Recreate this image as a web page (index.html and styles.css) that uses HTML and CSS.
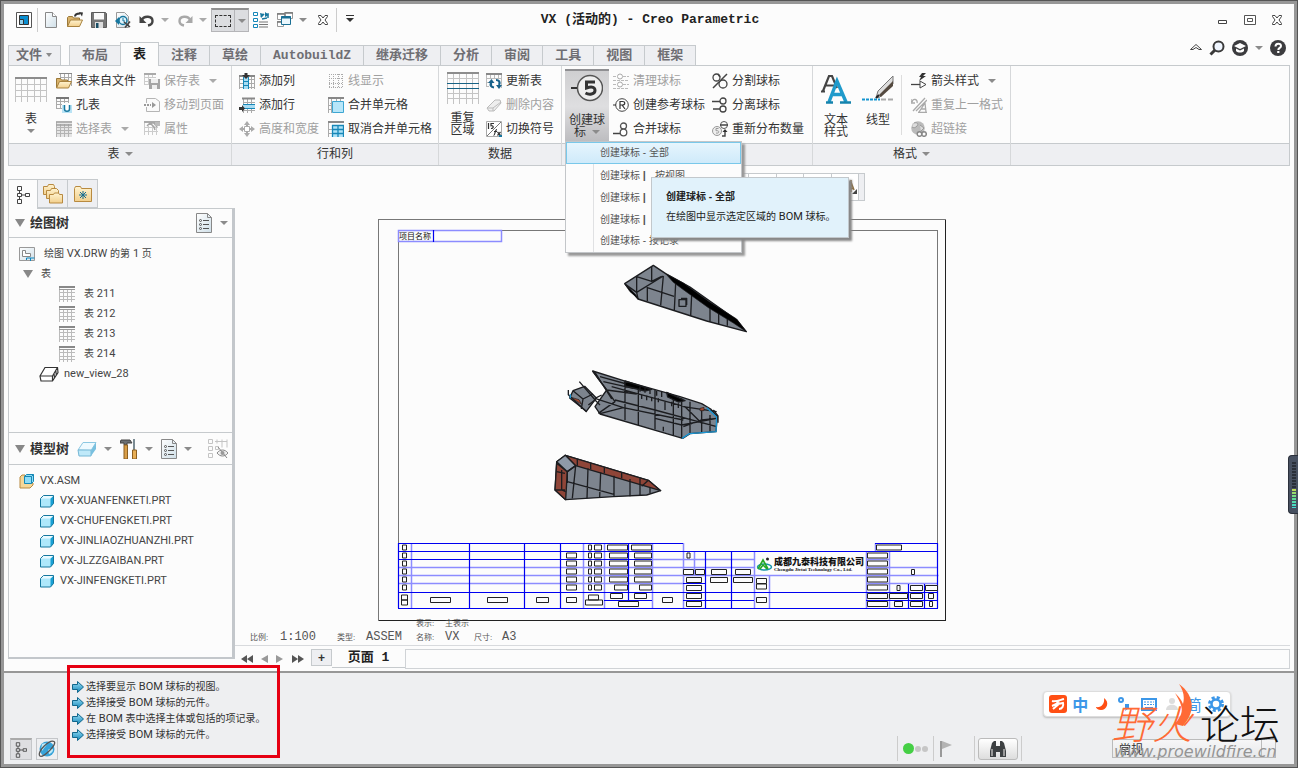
FILE: index.html
```html
<!DOCTYPE html>
<html lang="zh-CN">
<head>
<meta charset="utf-8">
<title>VX (活动的) - Creo Parametric</title>
<link rel="stylesheet" href="styles.css">
</head>
<body>
<svg class="sprite" aria-hidden="true">
  <defs>
    <linearGradient id="gFold" x1="0" y1="0" x2="0" y2="1"><stop offset="0" stop-color="#fff3d0"/><stop offset="1" stop-color="#f2cf8c"/></linearGradient>
    <linearGradient id="gPage" x1="0" y1="0" x2="1" y2="1"><stop offset="0" stop-color="#fff"/><stop offset="1" stop-color="#cfdfe8"/></linearGradient>
    <linearGradient id="gBlue" x1="0" y1="0" x2="1" y2="1"><stop offset="0" stop-color="#e6f8ff"/><stop offset="1" stop-color="#7dcbee"/></linearGradient>
    <linearGradient id="gArrow" x1="0" y1="0" x2="0" y2="1"><stop offset="0" stop-color="#9be0f8"/><stop offset="1" stop-color="#1186b8"/></linearGradient>
  </defs>
  <symbol id="app" viewBox="0 0 16 16"><path d="M.5.5h15v15H.5z" fill="#fff" stroke="#555"/><path d="M3.500 3.500h9v9h-9z" fill="#0a8ed0" stroke="#333"/><path d="M3.500 7.500h4v5h-4z" fill="#8fd0ee" stroke="#333"/></symbol>
  <symbol id="page" viewBox="0 0 16 16"><path d="M2.500.5h7l4 4v11h-11z" fill="url(#gPage)" stroke="#888"/><path d="M9.500.5v4h4" fill="#fff" stroke="#888"/></symbol>
  <symbol id="open" viewBox="0 0 16 16"><path d="M.5 14.500v-9l1-1h4l1 1.500h6v3" fill="#d9b36c" stroke="#9b7838"/><path d="M.5 14.500l3-6.500h12l-3 6.500z" fill="url(#gFold)" stroke="#a8823f"/><path d="M8 4.500c0-2 2-3 5-3" fill="none" stroke="#333" stroke-width="2"/><path d="M12 0l4 .5-1 4z" fill="#333"/></symbol>
  <symbol id="save" viewBox="0 0 16 16"><path d="M.5.5h14l1 1v14H.5z" fill="#777" stroke="#5c5c5c"/><path d="M3 1h10v6.500H3z" fill="#fafafa"/><path d="M4 10h8v6H4z" fill="#ddd"/><path d="M5 11h2.500v5H5z" fill="#1a4f66"/></symbol>
  <symbol id="pageback" viewBox="0 0 16 16"><path d="M1.500.5h8l4 4v11h-12z" fill="url(#gPage)" stroke="#999"/><path d="M0 9l4-4v8z" fill="#17779f"/><circle cx="8" cy="8.500" r="4" fill="#dff3fb" stroke="#17779f" stroke-width="1.500"/><path d="M8 6v3h2" fill="none" stroke="#17779f"/><path d="M9 10l6 5M15 9.500l-5 6" stroke="#444" stroke-width="1.600"/></symbol>
  <symbol id="undo" viewBox="0 0 16 16"><path d="M2.500 8.500C5 3 13.500 4 13.500 9c0 2.500-2 4-4.500 4.500" fill="none" stroke="#444" stroke-width="2.400"/><path d="M.500 4v7h7z" fill="#444"/></symbol>
  <symbol id="quick" viewBox="0 0 16 16"><g fill="#fff" stroke="#1586b8"><path d="M.5.5h4v3h-4zM.5 6.500h4v3h-4zM.5 12.500h4v3h-4z"/></g><path d="M6 10h9M6 12.500h9M6 15h9" stroke="#777"/><path d="M8 5l3-3M9 7l5-1M15 6V2l-3 1" fill="none" stroke="#17779f" stroke-width="1.500"/><path d="M7 1l4 1-3 4zM12 0l4 3-4 2z" fill="#17779f"/></symbol>
  <symbol id="wins" viewBox="0 0 16 16"><path d="M.5 1.500h8v6h-8zM7.500.5h8v6h-8zM.5 9.500h6v5h-6z" fill="#fff" stroke="#999"/><path d="M0 2h8M8 1h8M0 10h6" stroke="#777" stroke-width="1.500"/><path d="M4.500 4.500h9v8h-9z" fill="#eaf7fd" stroke="#1a6f94"/><path d="M4 5.500h10" stroke="#1a6f94" stroke-width="2"/></symbol>
  <symbol id="xx" viewBox="0 0 12 12"><path d="M1.500 1.500h2.500l2 2.500 2-2.500h2.500v1L8 6l2.500 3.500v1H8L6 8l-2 2.500H1.500v-1L4 6 1.500 2.500z" fill="#fff" stroke="#444"/></symbol>
  <symbol id="minw" viewBox="0 0 12 12"><path d="M1.500 6.500h8v3h-8z" fill="#fff" stroke="#444"/></symbol>
  <symbol id="maxw" viewBox="0 0 12 12"><path d="M.5 1.500h11v9H.5zM3.500 4.500h5v3h-5z" fill="#fff" stroke="#555"/></symbol>
  <symbol id="up" viewBox="0 0 12 12"><path d="M.5 7.500L6 2.500l5.500 5H9L6 5.500 3 7.500z" fill="#fff" stroke="#444"/></symbol>
  <symbol id="find" viewBox="0 0 16 16"><circle cx="9.500" cy="6.500" r="5" fill="#f0f6ff" stroke="#3a3a3a" stroke-width="2"/><path d="M6 10l-4.500 4.500" stroke="#3a3a3a" stroke-width="3"/></symbol>
  <symbol id="learn" viewBox="0 0 16 16"><circle cx="8" cy="8" r="8" fill="#3c3c3f"/><path d="M8 3l6 3-6 3-6-3zM4 8.500v2.500c2 2 6 2 8 0V8.500L8 10.500z" fill="#fff"/></symbol>
  <symbol id="help" viewBox="0 0 16 16"><circle cx="8" cy="8" r="8" fill="#3c3c3f"/><path d="M5.500 6.500c0-4 5.500-3.500 5.500-.5 0 2-2.700 1.800-2.700 4" fill="none" stroke="#fff" stroke-width="2"/><path d="M7.200 11h2.200v2H7.200z" fill="#fff"/></symbol>
  <symbol id="grid" viewBox="0 0 16 16"><path d="M.5 1v15M4.500 3v13M8.500 3v13M12.500 3v13M0 6.500h16M0 10.500h16M0 13.500h16" stroke="#bbb"/><path d="M0 1h16" stroke="#888" stroke-width="2"/><path d="M0 3.500h16" stroke="#999"/></symbol>
  <symbol id="big" viewBox="0 0 32 26"><path d="M.5 2v23M6.500 2v23M12.500 2v23M19.500 2v23M25.500 2v23M31.500 2v23M0 7.500h32M0 13.500h32M0 19.500h32" stroke="#c4c4c4"/><path d="M0 1h32" stroke="#8d8d8d" stroke-width="2"/></symbol>
  <symbol id="repeat" viewBox="0 0 32 32"><path d="M.5 2v30M6.500 2v30M12.500 2v30M19.500 2v30M25.500 2v30M31.500 2v30M0 6.500h32M0 21.500h32M0 26.500h32" stroke="#c4c4c4"/><path d="M0 1h32" stroke="#8d8d8d" stroke-width="2"/><path d="M0 11.500h32M0 16.500h32" stroke="#176284"/></symbol>
  <symbol id="tfile" viewBox="0 0 16 16"><path d="M4.500 1v6M8.500 1v6M12.500 1v12M4 4.500h12M15.500 1v12" stroke="#aaa"/><path d="M3 .5h13" stroke="#888"/><path d="M.5 14.500v-9h4l1 1.500h6v3" fill="#d9b36c" stroke="#9b7838"/><path d="M.5 15l3-6.500h12l-3 6.500z" fill="url(#gFold)" stroke="#a8823f"/></symbol>
  <symbol id="hole" viewBox="0 0 16 16"><path d="M.5 1v11M4.500 1v11M8.500 1v5M12.500 1v5M0 4.500h13M0 7.500h6M0 11.500h6" stroke="#aaa"/><path d="M0 1h13" stroke="#777" stroke-width="2"/><path d="M6 8h10v8H6z" fill="#b9e3f5"/><path d="M8.500 8v4c0 3 5 3 5 0V8" fill="#fff" stroke="#17779f" stroke-width="1.500"/></symbol>
  <symbol id="selt" viewBox="0 0 16 16"><path d="M0 0h16v16H0z" fill="#e6e6e6"/><path d="M.5 1v15M4.500 3v13M8.500 3v13M12.500 3v13M0 6.500h16M0 9.500h16M0 12.500h16" stroke="#b4b4b4"/><path d="M0 1h16M0 4h16" stroke="#a0a0a0" stroke-width="1.500"/></symbol>
  <symbol id="savet" viewBox="0 0 16 16"><path d="M.5 0v12M4.500 0v12M8.500 0v5M0 4.500h12M0 8.500h5M0 11.500h5" stroke="#ccc"/><path d="M0 1h12" stroke="#aaa" stroke-width="2"/><path d="M5 6h11v10H5z" fill="#a4a4a4"/><path d="M7 6h7v4H7zM8 12h5v4H8z" fill="#eee"/></symbol>
  <symbol id="move" viewBox="0 0 16 16"><path d="M2.500 6V1.500h9l4 3v10h-13V10" fill="#fafafa" stroke="#b5b5b5"/><path d="M0 8h7" stroke="#999" stroke-width="2" stroke-dasharray="2 1"/><path d="M8 5l4 3-4 3z" fill="#999"/></symbol>
  <symbol id="prop" viewBox="0 0 16 16"><path d="M.5 1v13M4.500 5v9M8.500 5v9M12.500 7v7M0 6.500h14M0 10.500h14" stroke="#ccc"/><path d="M0 1h16" stroke="#aaa" stroke-width="2"/><path d="M3 5l3-3 4 4 1 3M6 2h4l3 4" fill="none" stroke="#a5a5a5" stroke-width="1.500"/><path d="M11 1h5v4h-5z" fill="#bbb"/></symbol>
  <symbol id="addcol" viewBox="0 0 16 16"><path d="M.5 3v13M12.500 3v13M15.500 3v13M0 6.500h16M0 10.500h16M0 14.500h16" stroke="#aaa"/><path d="M0 3h16" stroke="#888" stroke-width="2"/><path d="M4 4h6v12H4z" fill="#a9dcf2"/><path d="M4.500 4v12M9.500 4v12M4 8.500h6M4 12.500h6" stroke="#1787b8"/><path d="M7 6L3 2h2.500V0h3v2H11z" fill="#333"/></symbol>
  <symbol id="addrow" viewBox="0 0 16 16"><path d="M4.500 1v15M8.500 1v15M12.500 1v15M4 5.500h12M4 13.500h12" stroke="#aaa"/><path d="M3 1.500h13" stroke="#888" stroke-width="2"/><path d="M4 7.500h12v4H4z" fill="#a9dcf2"/><path d="M4 7.500h12M4 11.500h12" stroke="#1787b8"/><path d="M6 11.500l-3-3.500v2H0v3h3v2z" fill="#333"/></symbol>
  <symbol id="hw" viewBox="0 0 16 16"><path d="M8 0l3 4H5zM8 16l3-4H5zM0 8l4-3v6zM16 8l-4-3v6z" fill="#aaa"/><path d="M5.500 5.500h5v5h-5z" fill="#fff" stroke="#aaa"/><path d="M8 4v2M8 10v2M4 8h2M10 8h2" stroke="#aaa" stroke-width="2"/></symbol>
  <symbol id="ldisp" viewBox="0 0 16 16"><path d="M1.500 1v14M5.500 1v14M10.500 1v14M14.500 1v14M1 1.500h14M1 5.500h14M1 10.500h14M1 14.500h14" stroke="#aaa" stroke-dasharray="1 1"/></symbol>
  <symbol id="merge" viewBox="0 0 16 16"><path d="M.5 1v15M2 6.500h14M0 8.500h4M0 12.500h4M3.500 1v15M8.500 1v4M12.500 1v4" stroke="#aaa"/><path d="M0 1h16" stroke="#888" stroke-width="2"/><path d="M4.500 4.500h11v11h-11z" fill="#b7e6f9" stroke="#3da6d2"/></symbol>
  <symbol id="unmerge" viewBox="0 0 16 16"><path d="M.5 1v15M0 8.500h4M0 12.500h4" stroke="#aaa"/><path d="M0 1h16" stroke="#888" stroke-width="2"/><path d="M4 4h12v12H4z" fill="#aee2f7"/><path d="M4.500 4v12M10 4v12M15.500 4v12M4 4.500h12M4 8.500h12M4 12.500h12" stroke="#1787b8" stroke-width="1.300"/></symbol>
  <symbol id="refresh" viewBox="0 0 16 16"><path d="M.5 1v12M4.500 1v4M8.500 1v4M12.500 1v4M15.500 1v14M0 5.500h16M0 9.500h3M0 13.500h3" stroke="#bbb"/><path d="M0 1h16" stroke="#888" stroke-width="2"/><path d="M5 12.500V9M8 14.500c-3-.5-4-2-3-5M10 7c3 0 4.500 2 3 5" fill="none" stroke="#17618a" stroke-width="2.200"/><path d="M2 10l3.500-4L8.500 10zM10 12h6l-3 4z" fill="#17618a"/></symbol>
  <symbol id="erase" viewBox="0 0 16 16"><path d="M1 11l8-8h5l1 3-7 8H3z" fill="#eee" stroke="#bbb"/><path d="M1 11h6l8-6M7 11v3" fill="none" stroke="#bbb"/></symbol>
  <symbol id="symb" viewBox="0 0 16 16"><path d="M.5.5h15v15H.5z" fill="#fff" stroke="#aaa"/><path d="M15 1L1 15" stroke="#777"/><path d="M2.500 2v6M8 2.500H5v2.200c3-.5 3 3 0 2.800M7.500 14.500c2 0 1-6 3.500-6M8 10.500h3M11.500 11l3 3.500M14.500 11l-3 3.500" fill="none" stroke="#333" stroke-width="1.200"/><path d="M13 14h3v2h-3z" fill="#17779f"/></symbol>
  <symbol id="balloon" viewBox="0 0 32 28"><circle cx="19" cy="14" r="12.500" fill="#eee" stroke="#555" stroke-width="1.500"/><path d="M0 14h6" stroke="#333" stroke-width="2"/><path d="M24 8h-8.500v6c6-2 8.500-.5 8.500 2.500 0 4-6 4.500-9.500 2.500" fill="none" stroke="#333" stroke-width="3"/></symbol>
  <symbol id="clean" viewBox="0 0 16 16"><path d="M0 3.500h4M10 3.500h6M0 7.500h16M0 11.500h4M10 11.500h6M0 15.500h16" stroke="#bbb" stroke-dasharray="3 1"/><circle cx="7" cy="3.500" r="2.500" fill="#fff" stroke="#aaa"/><circle cx="7" cy="11.500" r="2.500" fill="#fff" stroke="#aaa"/></symbol>
  <symbol id="refb" viewBox="0 0 16 16"><circle cx="9" cy="8" r="6.300" fill="#fff" stroke="#444"/><path d="M0 8h3M7 12V4.500h2.500c3 0 3 3.500 0 3.500H7M9 8l3 4" fill="none" stroke="#333" stroke-width="1.200"/></symbol>
  <symbol id="mergeb" viewBox="0 0 16 16"><path d="M0 12.500h8" stroke="#444" stroke-width="1.500"/><circle cx="10.500" cy="5" r="3" fill="#fff" stroke="#555" stroke-width="1.300"/><circle cx="10.500" cy="11.500" r="3.300" fill="#fff" stroke="#555" stroke-width="1.300"/></symbol>
  <symbol id="splitb" viewBox="0 0 16 16"><circle cx="4.500" cy="4.500" r="3.500" fill="none" stroke="#444" stroke-width="1.300"/><circle cx="11" cy="11" r="4" fill="none" stroke="#444" stroke-width="1.300"/><path d="M15 1L1 15M6 1l2 3" stroke="#444" stroke-width="1.500"/></symbol>
  <symbol id="detach" viewBox="0 0 16 16"><path d="M0 4.500h8M1 12h7" stroke="#444" stroke-width="1.300"/><circle cx="11" cy="4" r="3" fill="#fff" stroke="#444" stroke-width="1.300"/><circle cx="11" cy="12" r="3" fill="#fff" stroke="#444" stroke-width="1.300"/></symbol>
  <symbol id="redist" viewBox="0 0 16 16"><circle cx="5" cy="10" r="4.500" fill="#eee" stroke="#999"/><path d="M6.500 7.500H4v2.200c4-.6 3.500 3.300 0 2.300" fill="none" stroke="#999"/><circle cx="12" cy="4" r="3.500" fill="#fff" stroke="#555"/><path d="M8 4h8M10 15h3V9" fill="none" stroke="#444" stroke-width="1.400"/><path d="M10.500 11L13 8l2.500 3z" fill="#333"/></symbol>
  <symbol id="aa" viewBox="0 0 30 30"><path d="M2 17L8 2h3l5 12M4 11.500h9M0 17.500h4" fill="none" stroke="#444" stroke-width="2.200"/><path d="M8 28l8-21 9 21M12 20.500h10" fill="none" stroke="#1f9acb" stroke-width="3.400"/><path d="M5 28.500h7M19 28.500h11" stroke="#1583ad" stroke-width="2.500"/></symbol>
  <symbol id="pen" viewBox="0 0 32 28"><path d="M14 23l2-7L31 1v8L18 22z" fill="#ddd" stroke="#777"/><path d="M17 20L31 6v5L19 22z" fill="#554a40"/><path d="M14 23l3-3" stroke="#222" stroke-width="2"/><path d="M0 24.500h18" stroke="#1695d0" stroke-width="2" stroke-dasharray="3 1"/><path d="M19 24.500h13" stroke="#aaa" stroke-width="2" stroke-dasharray="5 2"/></symbol>
  <symbol id="arrowst" viewBox="0 0 16 16"><path d="M0 11.500h11" stroke="#444" stroke-width="1.300"/><path d="M9 8l6 3.500-6 3.500z" fill="#fff" stroke="#444"/><path d="M11 0h4l-3 3h3L8 8l2-4H8z" fill="#333"/></symbol>
  <symbol id="repfmt" viewBox="0 0 16 16"><path d="M1 5c1-4 6-3 5 1M0 2v4h4M2 14L14 1M5 14L16 3M8 15l6-9 1 9M10 12h5M7 15.500h9" fill="none" stroke="#aaa" stroke-width="1.300"/></symbol>
  <symbol id="link" viewBox="0 0 16 16"><circle cx="7" cy="7" r="6.800" fill="#bbb"/><path d="M3 2c3-1 5 1 3 3S3 7 1 6M9 4l4 3-3 3" fill="#ddd" stroke="#999"/><circle cx="8.500" cy="13" r="2.300" fill="#fff" stroke="#888" stroke-width="1.500"/><circle cx="13" cy="13" r="2.300" fill="none" stroke="#888" stroke-width="1.500"/></symbol>
  <symbol id="tree" viewBox="0 0 14 20"><path d="M1.500 1.500h4v4h-4zM1.500 8.500h4v3h-4zM1.500 14.500h4v4h-4zM9.500 8.500h4v3h-4zM3.500 5.500v3M3.500 11.500v3M5.500 10h4" fill="none" stroke="#444"/></symbol>
  <symbol id="folders" viewBox="0 0 20 20"><g fill="url(#gFold)" stroke="#b88a40"><path d="M.5 2.500h4l1-2h5l1 2v8H.5z"/><path d="M3.500 6.500h4l1-2h5l2 2v8h-12z"/><path d="M6.500 10.500h4l1-1.500h4l1 1.500h3v8.500h-13z"/></g></symbol>
  <symbol id="favs" viewBox="0 0 18 18"><path d="M.5 3.500l1-2h5l1 2h10v13H.5z" fill="url(#gFold)" stroke="#b88a40"/><path d="M9 6v8M5 10h8M6 7l6 6M12 7l-6 6" stroke="#176d91"/></symbol>
  <symbol id="list" viewBox="0 0 16 20"><path d="M.5.5h11l4 4v15H.5z" fill="url(#gPage)" stroke="#888"/><path d="M11.500.5v4h4" fill="none" stroke="#888"/><circle cx="4.500" cy="7.500" r="1" fill="none" stroke="#555"/><circle cx="4.500" cy="11.500" r="1" fill="none" stroke="#555"/><circle cx="4.500" cy="15.500" r="1" fill="none" stroke="#555"/><path d="M7 7.500h6M7 11.500h6M7 15.500h6" stroke="#555"/></symbol>
  <symbol id="drw" viewBox="0 0 16 14"><path d="M.5.5h15v13H.5z" fill="url(#gPage)" stroke="#999"/><path d="M3.500 3.500h3v3h5v3h-8z" fill="#fff" stroke="#888"/><path d="M7.500 13v-2h8M11.500 11v3" fill="none" stroke="#0d85bd"/></symbol>
  <symbol id="view" viewBox="0 0 20 16"><path d="M1 10L6 1.500h12.500l.5 5-5.500 8.500H2zM1 10h12.500L18.500 1.500M13.500 10v5M15 7.500l.5 4.500M16.800 4.500l.5 4.500" fill="#fff" stroke="#333" stroke-width="1.200"/></symbol>
  <symbol id="layer" viewBox="0 0 20 16"><path d="M1 9L6 1.500h13l-5 8z" fill="#eefaff" stroke="#8cc8e2"/><path d="M1 9l1 6h12v-6z" fill="#bfe9f9" stroke="#75b7d5"/><path d="M14 9.500v5.500l5-7V1.500z" fill="#79c0df"/></symbol>
  <symbol id="tools" viewBox="0 0 18 20"><path d="M1 1h9l2 3H7v2H4V4H0z" fill="#6b6f73" stroke="#444"/><path d="M4 6h3.500v14H4z" fill="#d99e48" stroke="#8c5f20"/><path d="M14 0v11" stroke="#7b8b93" stroke-width="2"/><path d="M12.500 11h4v9h-4z" fill="#e8ae55" stroke="#8c5f20"/></symbol>
  <symbol id="hidet" viewBox="0 0 20 20"><path d="M.5.5h4v4h-4zM.5 7.500h4v4h-4zM.5 14.500h4v4h-4zM7.500 7.500h3v3h-3zM9 .5v4M14 .5v8M19 .5v8M7 2.500h12" fill="none" stroke="#c4c4c4"/><path d="M9 14c3-4 8-4 11 0-3 4-8 4-11 0zM10 8l9 11" fill="#eee" stroke="#888"/><circle cx="14.500" cy="14" r="2" fill="#999"/></symbol>
  <symbol id="asm" viewBox="0 0 16 16"><path d="M1 4l2-2h3v8h8v2l-3 3H1z" fill="#f6d798" stroke="#b88a40"/><path d="M5.500 3.500l2-2h7v7l-2 2h-7z" fill="#8fdcf6" stroke="#1688b5"/><path d="M12.500 3.500v7M5.500 3.500h7l2-2" fill="none" stroke="#1688b5"/></symbol>
  <symbol id="prt" viewBox="0 0 14 14"><path d="M.5 4.500l3-3h10v8l-3 3.500H.5z" fill="#aee8fb"/><path d="M10.500 4.500v8.500l3-3.500v-8z" fill="#18a0d4"/><path d="M.5 4.500l3-3h10l-3 3z" fill="#e9faff"/><path d="M.5 4.500l3-3h10v8l-3 3.500H.5z" fill="none" stroke="#16789f"/></symbol>
  <symbol id="msg" viewBox="0 0 12 12"><path d="M.5 3.500h5v-3l6 5.500-6 5.500v-3h-5z" fill="url(#gArrow)" stroke="#11678c"/></symbol>
  <symbol id="globe" viewBox="0 0 18 18"><circle cx="9" cy="9" r="7.500" fill="#38a4da"/><path d="M4 4c4-2 6 0 3 3s-1 4-4 3zM10 10c3-2 5-2 5 0s-3 4-4 4z" fill="#bde9f8"/><path d="M2 16C-2 12 12-1 16 1.500 20 4 5 18 2 16z" fill="none" stroke="#555" stroke-width="1.300"/></symbol>
  <symbol id="flag" viewBox="0 0 12 16"><path d="M1 0v16" stroke="#999" stroke-width="2"/><path d="M2 0l10 4-10 4z" fill="#b3b3b3"/></symbol>
  <symbol id="binoc" viewBox="0 0 18 16"><path d="M3 2l2-2h2v5h4V0h2l2 2 2 8v6h-6v-5H7v5H1v-6z" fill="#3d4042"/><path d="M3 8v7M15 8v7" stroke="#999" stroke-width="2"/></symbol>
</svg>

<div class="window">
  <header class="titlebar">
    <div class="quick">
      <button class="qb" aria-label="Creo"><svg><use href="#app"/></svg></button>
      <i class="sep"></i>
      <button class="qb" aria-label="新建"><svg><use href="#page"/></svg></button>
      <button class="qb" aria-label="打开"><svg><use href="#open"/></svg></button>
      <button class="qb" aria-label="保存"><svg><use href="#save"/></svg></button>
      <button class="qb" aria-label="返回"><svg><use href="#pageback"/></svg></button>
      <button class="qb" aria-label="撤消"><svg><use href="#undo"/></svg></button>
      <button class="qa" aria-label="撤消列表"><i class="caret light"></i></button>
      <button class="qb" aria-label="重做"><svg class="flip"><use href="#undo"/></svg></button>
      <button class="qa" aria-label="重做列表"><i class="caret light"></i></button>
      <div class="split">
        <button class="marq" aria-label="选择"><i></i></button>
        <button class="marqa" aria-label="选择列表"><i class="caret"></i></button>
      </div>
      <button class="qb" aria-label="重新生成"><svg><use href="#quick"/></svg></button>
      <button class="qb" aria-label="窗口"><svg><use href="#wins"/></svg></button>
      <button class="qa" aria-label="窗口列表"><i class="caret"></i></button>
      <button class="qb" aria-label="关闭"><svg class="s12"><use href="#xx"/></svg></button>
      <i class="sep"></i>
      <button class="qb" aria-label="自定义"><i class="caret custom"></i></button>
    </div>
    <h1>VX (活动的) - Creo Parametric</h1>
    <div class="winctl">
      <button aria-label="最小化"><svg class="s12"><use href="#minw"/></svg></button>
      <button aria-label="最大化"><svg class="s12"><use href="#maxw"/></svg></button>
      <button aria-label="关闭窗口"><svg class="s12"><use href="#xx"/></svg></button>
    </div>
  </header>

  <nav class="tabs">
    <button class="tab file">文件<i class="caret"></i></button>
    <button class="tab">布局</button><button class="tab active">表</button><button class="tab">注释</button><button class="tab">草绘</button><button class="tab">AutobuildZ</button><button class="tab">继承迁移</button><button class="tab">分析</button><button class="tab">审阅</button><button class="tab">工具</button><button class="tab">视图</button><button class="tab last">框架</button>
    <div class="helpers">
      <button aria-label="最小化功能区"><svg class="s12"><use href="#up"/></svg></button>
      <button aria-label="搜索"><svg><use href="#find"/></svg></button>
      <button aria-label="学习"><svg><use href="#learn"/></svg></button>
      <i class="caret"></i>
      <button aria-label="帮助"><svg><use href="#help"/></svg></button>
    </div>
  </nav>

  <section class="ribbon">
    <div class="group g1">
      <div class="gbody">
        <button class="bigbtn"><svg class="i26"><use href="#big"/></svg><span>表</span><i class="caret"></i></button>
        <div class="col">
          <button class="cmd"><svg><use href="#tfile"/></svg>表来自文件</button>
          <button class="cmd"><svg><use href="#hole"/></svg>孔表</button>
          <button class="cmd off"><svg><use href="#selt"/></svg>选择表<i class="caret light"></i></button>
        </div>
        <div class="col">
          <button class="cmd off"><svg><use href="#savet"/></svg>保存表<i class="caret light"></i></button>
          <button class="cmd off"><svg><use href="#move"/></svg>移动到页面</button>
          <button class="cmd off"><svg><use href="#prop"/></svg>属性</button>
        </div>
      </div>
      <div class="gname">表<i class="caret"></i></div>
    </div>
    <div class="group g2">
      <div class="gbody">
        <div class="col">
          <button class="cmd"><svg><use href="#addcol"/></svg>添加列</button>
          <button class="cmd"><svg><use href="#addrow"/></svg>添加行</button>
          <button class="cmd off"><svg><use href="#hw"/></svg>高度和宽度</button>
        </div>
        <div class="col">
          <button class="cmd off"><svg><use href="#ldisp"/></svg>线显示</button>
          <button class="cmd"><svg><use href="#merge"/></svg>合并单元格</button>
          <button class="cmd"><svg><use href="#unmerge"/></svg>取消合并单元格</button>
        </div>
      </div>
      <div class="gname">行和列</div>
    </div>
    <div class="group g3">
      <div class="gbody">
        <button class="bigbtn"><svg class="i32"><use href="#repeat"/></svg><span>重复<br>区域</span></button>
        <div class="col">
          <button class="cmd"><svg><use href="#refresh"/></svg>更新表</button>
          <button class="cmd off"><svg><use href="#erase"/></svg>删除内容</button>
          <button class="cmd"><svg><use href="#symb"/></svg>切换符号</button>
        </div>
      </div>
      <div class="gname">数据</div>
    </div>
    <div class="group g4">
      <div class="gbody">
        <button class="bigbtn pressed" aria-expanded="true"><svg class="i32"><use href="#balloon"/></svg><span>创建球<br>标<i class="caret"></i></span></button>
        <div class="col">
          <button class="cmd off"><svg><use href="#clean"/></svg>清理球标</button>
          <button class="cmd"><svg><use href="#refb"/></svg>创建参考球标</button>
          <button class="cmd"><svg><use href="#mergeb"/></svg>合并球标</button>
        </div>
        <div class="col">
          <button class="cmd"><svg><use href="#splitb"/></svg>分割球标</button>
          <button class="cmd"><svg><use href="#detach"/></svg>分离球标</button>
          <button class="cmd"><svg><use href="#redist"/></svg>重新分布数量</button>
        </div>
      </div>
      <div class="gname"></div>
      <ul class="menu">
        <li><button class="hot">创建球标 - 全部</button></li>
        <li><button>创建球标 <b>|</b>&nbsp;&nbsp; 按视图</button></li>
        <li><button>创建球标 <b>|</b></button></li>
        <li><button>创建球标 <b>|</b></button></li>
        <li><button>创建球标 - 按记录</button></li>
      </ul>
      <div class="tip" role="tooltip"><strong>创建球标 - 全部</strong><p>在绘图中显示选定区域的 <span class="lat">BOM</span> 球标。</p></div>
    </div>
    <div class="group g5">
      <div class="gbody">
        <button class="bigbtn style"><svg class="i30"><use href="#aa"/></svg><span>文本<br>样式</span></button>
        <button class="bigbtn"><svg class="i32"><use href="#pen"/></svg><span>线型</span></button>
        <i class="vline"></i>
        <div class="col">
          <button class="cmd"><svg><use href="#arrowst"/></svg>箭头样式<i class="caret"></i></button>
          <button class="cmd off"><svg><use href="#repfmt"/></svg>重复上一格式</button>
          <button class="cmd off"><svg><use href="#link"/></svg>超链接</button>
        </div>
      </div>
      <div class="gname">格式<i class="caret"></i></div>
    </div>
    <div class="group rest"><div class="gbody"></div><div class="gname"></div></div>
  </section>

  <main class="work">
    <aside class="side">
      <div class="ptabs">
        <button class="ptab on" aria-label="模型树"><svg class="w14"><use href="#tree"/></svg></button>
        <button class="ptab" aria-label="文件夹浏览器"><svg class="w20"><use href="#folders"/></svg></button>
        <button class="ptab" aria-label="收藏夹"><svg class="w18"><use href="#favs"/></svg></button>
      </div>
      <div class="panel">
        <div class="phead"><i class="tri"></i><h2>绘图树</h2><button class="push" aria-label="设置"><svg class="w16"><use href="#list"/></svg><i class="caret"></i></button></div>
        <ul class="dtree">
          <li><svg><use href="#drw"/></svg><span>绘图 <span class="lat">VX.DRW</span> 的第 <span class="lat">1</span> 页</span></li>
          <li class="l1"><i class="tri"></i><span>表</span></li>
          <li class="l2"><svg><use href="#grid"/></svg><span>表 <span class="lat">211</span></span></li>
          <li class="l2"><svg><use href="#grid"/></svg><span>表 <span class="lat">212</span></span></li>
          <li class="l2"><svg><use href="#grid"/></svg><span>表 <span class="lat">213</span></span></li>
          <li class="l2"><svg><use href="#grid"/></svg><span>表 <span class="lat">214</span></span></li>
          <li class="lv"><svg class="v20"><use href="#view"/></svg><span class="lat">new_view_28</span></li>
        </ul>
        <div class="phead model"><i class="tri"></i><h2>模型树</h2>
          <button aria-label="显示"><svg class="v20"><use href="#layer"/></svg><i class="caret"></i></button>
          <button aria-label="工具"><svg class="w18"><use href="#tools"/></svg><i class="caret"></i></button>
          <button aria-label="设置"><svg class="w16"><use href="#list"/></svg><i class="caret"></i></button>
          <button class="push" aria-label="隐藏"><svg class="w20"><use href="#hidet"/></svg></button>
        </div>
        <ul class="mtree">
          <li class="root"><svg><use href="#asm"/></svg><span class="lat">VX.ASM</span></li>
          <li><svg class="p14"><use href="#prt"/></svg><span class="lat">VX-XUANFENKETI.PRT</span></li>
          <li><svg class="p14"><use href="#prt"/></svg><span class="lat">VX-CHUFENGKETI.PRT</span></li>
          <li><svg class="p14"><use href="#prt"/></svg><span class="lat">VX-JINLIAOZHUANZHI.PRT</span></li>
          <li><svg class="p14"><use href="#prt"/></svg><span class="lat">VX-JLZZGAIBAN.PRT</span></li>
          <li><svg class="p14"><use href="#prt"/></svg><span class="lat">VX-JINFENGKETI.PRT</span></li>
        </ul>
      </div>
    </aside>
    <section class="stage">
      <div class="view">
        <svg class="drawing" viewBox="236 166 1054 479">
          <g fill="none" stroke="#777" shape-rendering="crispEdges">
            <path d="M378.500 620.500V219.500H945.500" stroke-width="1.500"/><path d="M945.500 219.500V620.500H378.500" stroke="#222" stroke-width="1.500"/>
            <path d="M398.500 543V230.500H937.500V543"/>
          </g>
          <g fill="none" stroke="#8c8cff" stroke-width="1.500">
            <path d="M398.500 230.500h103v11h-103zM398.500 567.500h285M398.500 575.500h540M398.500 583.500h285M411.500 543v65M583.500 543v65M604.500 543v65M652.500 543v65M683.500 543v65M694.500 551v24M754.500 551v57M769.500 575v33M866.500 551v57M889.500 551v57M653 559.500h101M683 567.500h71M866 559.500h23M866 567.500h72M866 583.500h72M875.500 551v-8"/>
          </g>
          <g fill="none" stroke="#0000f0" stroke-width="1.200">
            <path d="M433.500 230v12M398.500 543v65M398 543.500h285M398 551.500h540M398 559.500h254M398 592.500h540M398 608.500h540M469.500 543v65M524.500 543v65M560.500 543v65M628.500 543v57M604 600.500h48M705.500 551v57M731.500 551v57M683 600.500h71M866 600.500h72M908.500 584v24M924.500 584v24M937.500 543v65M875 543.500h63M683 583.500h22"/>
          </g>
          <g fill="#fcfcfc" stroke="#222">
            <path d="M402.500 545h4v5h-4zM402.500 553h4v5h-4zM402.500 561h4v5h-4zM402.500 569h4v5h-4zM402.500 577h4v5h-4zM402.500 585h4v5h-4zM401.500 595h6v5h-6zM401.500 600h6v5h-6zM430.500 597.500h20v5h-20zM487.500 597.500h20v5h-20zM536.500 597.500h12v5h-12zM566.500 597.500h10v5h-10z"/>
            <path d="M566.500 553h10v5h-10zM566.500 561h10v5h-10zM566.500 569h10v5h-10zM566.500 577h10v5h-10zM566.500 585h10v5h-10zM588.500 545h3v5h-3zM588.500 553h3v5h-3zM588.500 561h3v5h-3zM588.500 569h3v5h-3zM588.500 577h3v5h-3zM588.500 585h3v5h-3zM594.500 545h7v5h-7zM594.500 553h7v5h-7zM594.500 561h7v5h-7zM594.500 569h7v5h-7zM594.500 577h7v5h-7zM594.500 585h7v5h-7zM588.500 595h10v5h-10zM585.500 600h17v5h-17z"/>
            <path d="M607.500 545h20v5h-20zM609.500 553h18v5h-18zM609.500 561h18v5h-18zM609.500 569h18v5h-18zM609.500 577h18v5h-18zM614.500 585h13v5h-13zM610.500 593.500h12v5h-12zM631.500 545h20v5h-20zM634.500 553h17v5h-17zM634.500 561h17v5h-17zM634.500 569h17v5h-17zM634.500 577h17v5h-17zM639.500 585h12v5h-12zM634.500 593.500h12v5h-12zM618.500 601.500h20v5h-20zM662.500 597.500h10v5h-10z"/>
            <path d="M687 553h3v5h-3zM683.500 569.500h10v5h-10zM695.500 569.500h9v5h-9zM711.500 569.500h15v5h-15zM735.500 569.500h15v5h-15zM686.500 577.500h15v5h-15zM710.500 577.500h17v5h-17zM733.500 577.500h19v5h-19zM686.500 585.500h15v5h-15zM686.500 593.500h15v5h-15zM686.500 601.500h15v5h-15zM756.500 578.500h10v5h-10zM756.500 584h10v5h-10zM756.500 597.500h10v5h-10z"/>
            <path d="M876.500 545h25v5h-25zM867.500 553h20v5h-20zM867.500 561h20v5h-20zM867.500 569h20v5h-20zM867.500 577h20v5h-20zM867.500 585h20v5h-20zM867.500 593.500h20v5h-20zM867.500 601.500h20v5h-20zM911.500 569.500h3v5h-3zM897 585.500h3v5h-3zM910.500 585.500h12v5h-12zM925.500 585.500h12v5h-12zM889.500 593.500h18v5h-18zM910.500 593.500h12v5h-12zM928.500 593.500h5v5h-5zM894.500 601.500h8v5h-8zM910.500 601.500h12v5h-12zM929.500 601.500h3v5h-3z"/>
          </g>
          <text x="399" y="239" class="tiny dark">项目名称</text>
          <ellipse cx="764.500" cy="567" rx="7" ry="3" fill="none" stroke="#1795a9" stroke-width="1.500"/><path d="M758 569l5-9 5 9M760 569l3-4 4 4" fill="none" stroke="#25a825" stroke-width="1.600"/><circle cx="767.500" cy="559" r="1.500" fill="#222"/>
          <text x="774" y="565" class="firm">成都九泰科技有限公司</text>
          <text x="774" y="571" class="firm-en">Chengdu Jivtai Technology Co., Ltd.</text>
          <g transform="translate(540 255) scale(.33333)" stroke="#1c1d20" stroke-width="4" stroke-linejoin="round">
            <path d="M254 86L340 31 377 56 450 96 590 195 619 230 500 198 294 132z" fill="#7d848e"/>
            <path d="M254 86L290 112 294 132M290 112L370 63M290 65v46M335 34v45M290 65l45 14 30-15M322 96v42M290 112l-30-20M322 98l80 26M370 63l-8 88M407 85l-4 80M455 120l-3 62M510 158v42M536 175v32M562 190v22M417 134h21v20h-21zM423 130h17v20" fill="none" stroke-width="4"/>
            <path d="M377 56L430 84 508 140 590 192 619 230 580 204 505 158 430 104 400 82zM256 90l30 28 10 14-26-22z" stroke-width="2"/>
            <path d="M158 348L260 380 420 425 485 446 512 462 532 485 528 530 450 536 428 550 180 477 165 455 200 405z" fill="#7d848e"/>
            <path d="M158 348l42 57 90 12M165 352l50 80M180 365l80 22M190 380l90 20M200 405l25 35-50 35M165 430l85 28-70 18M225 435l120 30 185 50M215 395l220 60 50 50M255 380v115M295 392v118M345 405v118M400 425v118M425 430v120M450 440v95M485 460v72M510 480v50M250 458l180 37M345 490l80 20 105-20M370 515v14M430 515l55-20 45-5M430 455l100 15" fill="none" stroke-width="4"/>
            <path d="M255 378l80 25-20 5-60-15zM380 412l55 25-20 4-32-15zM300 395v15M315 398v15M330 402v15M350 407v15M365 411v15M305 420v12M320 422v14M335 427v12M355 430v12M375 440v25M395 440v14M415 445v14"/>
            <path d="M99 407l35-13 35 35-30 40-50-40z" fill="#7d848e"/><path d="M118 380l50 58M85 405v14l55 52M99 407l30 25-5 30M129 432l30-15M145 450l20-15M165 430l20-10M165 435l15 15" fill="none"/><path d="M97 428l20 6 8 14-22-14zM480 460l12-3v10h-12z" fill="#a6492f" stroke-width="2"/>
            <path d="M91 418v12M500 458l30 28-2 44-80 6-22 14" fill="none" stroke="#1a96d4"/><path d="M520 465l14 18v20" fill="none"/>
            <path d="M50 620L76 601 325 676 362 707 320 720 220 725 77 734 45 705z" fill="#7d848e"/>
            <path d="M76 601L325 676 362 707 107 632z" fill="#8f4538"/><path d="M50 625L82 650 77 734 45 705z" fill="#8f4538"/><path d="M50 620L76 601 107 632 82 650z" fill="#8f9aa8"/>
            <path d="M107 632l-10 98M144 640l-3 90M182 652l-3 74M222 662v62M270 672v52M300 690v32M330 697v18M82 680l140 38M107 632l-25 18v34M112 612v20M152 625v18M193 637v18M245 652v18M300 670v18M325 676l-20 18M50 650l25 5M65 645v60l12 5M45 705h30" fill="none" stroke-width="4"/>
          </g>
          <g class="cap">
            <text x="250" y="640">比例:</text><text x="280" y="640" class="capl">1:100</text>
            <text x="337" y="640">类型:</text><text x="366" y="640" class="capl">ASSEM</text>
            <text x="416" y="640">名称:</text><text x="445" y="640" class="capl">VX</text>
            <text x="474" y="640">尺寸:</text><text x="502" y="640" class="capl">A3</text>
            <text x="416" y="626">表示:</text><text x="445" y="626">主表示</text>
          </g>
        </svg>
        <div class="floatbar"><i></i><i></i><i></i><i></i><i><svg viewBox="0 0 16 16"><path d="M3 6l6-3M9 1v12M4 8l8 2M9 3l3 8" fill="none" stroke="#8a6a3a" stroke-width="1.500"/><path d="M15 10v5h-5z" fill="#444"/></svg></i></div>
      </div>
      <div class="sheets">
        <div class="nav"><button aria-label="首页"><svg viewBox="0 0 12 8"><path d="M6 0v8L0 4zM12 0v8L6 4z" fill="#555"/></svg></button><button aria-label="上一页"><svg viewBox="0 0 12 8"><path d="M10 0v8L3 4z" fill="#999"/></svg></button><button aria-label="下一页"><svg viewBox="0 0 12 8"><path d="M1 0v8l7-4z" fill="#999"/></svg></button><button aria-label="末页"><svg viewBox="0 0 12 8"><path d="M0 0v8l6-4zM6 0v8l6-4z" fill="#555"/></svg></button></div>
        <button class="plus">+</button>
        <button class="sheet">页面 1</button>
        <div class="filler"></div>
      </div>
    </section>
  </main>

  <footer class="status">
    <div class="sbtns">
      <button class="on" aria-label="导航器"><svg class="w14"><use href="#tree"/></svg></button>
      <button aria-label="浏览器"><svg class="w18"><use href="#globe"/></svg></button>
    </div>
    <ul class="log">
      <li><svg class="s12"><use href="#msg"/></svg><span>选择要显示 <span class="lat">BOM</span> 球标的视图。</span></li>
      <li><svg class="s12"><use href="#msg"/></svg><span>选择接受 <span class="lat">BOM</span> 球标的元件。</span></li>
      <li><svg class="s12"><use href="#msg"/></svg><span>在 <span class="lat">BOM</span> 表中选择主体或包括的项记录。</span></li>
      <li><svg class="s12"><use href="#msg"/></svg><span>选择接受 <span class="lat">BOM</span> 球标的元件。</span></li>
    </ul>
    <div class="sright">
      <div class="cell lights"><i class="go"></i><i></i><i></i></div>
      <div class="cell flagc"><svg class="flag"><use href="#flag"/></svg></div>
      <div class="cell findc"><button aria-label="查找"><svg class="w18 h16"><use href="#binoc"/></svg></button></div>
      <div class="cell filter"><select aria-label="过滤器"><option>常规</option></select></div>
    </div>
    <div class="ime">
      <svg viewBox="0 0 18 18"><rect width="18" height="18" rx="3" fill="#ff4f14"/><path d="M3 6c4 1 8-1 12-2M3 11c3-1 5-2 7-5M9 9l5-1c1 3-1 6-4 6M4 14l7-6" fill="none" stroke="#fff" stroke-width="2"/></svg>
      <b>中</b>
      <svg viewBox="0 0 18 18"><path d="M11 3c6 4 3 12-3 12-3 0-5-2-5-3 5 1 9-3 8-9z" fill="#ff4f14"/></svg>
      <svg viewBox="0 0 18 18"><circle cx="5" cy="5" r="2" fill="none" stroke="#3c97e8" stroke-width="2"/><path d="M9 9h4v4l-4 3 1-3H9z" fill="#3c97e8"/></svg>
      <svg viewBox="0 0 18 18"><rect x="2" y="4" width="14" height="11" fill="none" stroke="#3c97e8" stroke-width="2"/><path d="M4 7h10M4 9.500h10" stroke="#3c97e8" stroke-dasharray="2 1"/><path d="M5 12.500h8" stroke="#3c97e8"/></svg>
      <svg viewBox="0 0 18 18"><circle cx="9" cy="6" r="3" fill="#ddd"/><path d="M3 15c0-7 12-7 12 0z" fill="#ddd"/></svg>
      <b class="thin">简</b>
      <svg viewBox="0 0 18 18"><circle cx="9" cy="9" r="6.500" fill="none" stroke="#3c97e8" stroke-width="3" stroke-dasharray="3 2.100"/><circle cx="9" cy="9" r="4.500" fill="none" stroke="#3c97e8" stroke-width="2.500"/></svg>
    </div>
    <div class="mark"><span class="fire">野火</span><span>论坛</span><svg viewBox="0 0 18 44"><path d="M5 0c14 10 18 26 4 42l-8-2C10 28 10 24 1 9c4 4 6 6 8 11C11 12 9 6 5 0z" fill="#ff6a35"/></svg><em>www.proewildfire.cn</em></div>
    <div class="redbox"></div>
  </footer>
</div>
<div class="meter"><i></i></div>
</body>
</html>
```
FILE: styles.css
```css
*{box-sizing:border-box}
html,body{margin:0;height:100%}
body{position:relative;font:12px/16px "Liberation Sans","Noto Sans CJK SC",sans-serif;color:#333;background:#fcfcfc}
button{border:0;background:none;padding:0;margin:0;font:inherit;color:inherit}
ul{list-style:none;margin:0;padding:0}
h1,h2,p{margin:0}
svg{display:block;width:16px;height:16px;flex:none}
.sprite{position:absolute;width:0;height:0}
.s12{width:12px;height:12px}
.w14{width:14px;height:20px}
.w16{width:16px;height:20px}
.w18{width:18px;height:20px}
.w20{width:20px;height:20px}
.h16{height:16px}
.v20{width:20px;height:16px}
.p14{width:14px;height:14px}
.i26{width:32px;height:26px}
.i30{width:30px;height:30px}
.i32{width:32px;height:32px}
.lat{font-family:Roboto,"Liberation Sans",sans-serif;font-size:11px}
.caret{display:inline-block;border:4px solid transparent;border-top-color:#8b8b8b;border-bottom:0;flex:none}
.caret.light{border-top-color:#aaa}
.tri{border:5px solid transparent;border-top:8px solid #888;border-bottom:0}
.window{position:relative;height:100vh;min-height:700px;display:flex;flex-direction:column;border:4px solid #979797;outline:1px solid #555;outline-offset:-1px;overflow:hidden}

.titlebar{height:32px;flex:none;display:grid;grid-template-columns:1fr auto 1fr;align-items:center;padding:0 6px 0 8px}
.titlebar h1{font:bold 13px/16px "Liberation Mono","Noto Sans CJK SC",monospace;color:#222}
.quick{display:flex;align-items:center}
.qb{width:24px;height:24px;display:grid;place-items:center}
.qa{width:14px;height:24px;display:grid;place-items:center start;padding-left:2px}
.sep{width:1px;height:24px;background:#ccc;margin:0 1px}
.flip{transform:scaleX(-1);opacity:.45}
.split{display:flex;width:38px;height:24px;border:1px solid #b5b5b8;border-top:2px solid #909090;background:#dcdde0}
.marq{width:23px;display:grid;place-items:center;border-right:1px solid #b5b5b8}
.marq i{width:16px;height:12px;border:1px dashed #333}
.marqa{flex:1;display:grid;place-items:center}
.custom{border-top-color:#333;position:relative}
.custom::before{content:"";position:absolute;left:-4px;top:-7px;width:8px;height:1px;background:#333}
.winctl{display:flex;justify-content:flex-end;gap:15px;padding-right:5px}

.tabs{height:29px;flex:none;display:flex;align-items:flex-end;margin:0 4px;position:relative;z-index:1}
.tab{height:20px;padding:0 12px;border:1px solid #c6cacd;border-right:0;border-bottom:0;background:#eeeff2;color:#6f6e73;font:bold 13px/18px "Liberation Mono","Noto Sans CJK SC",monospace;white-space:nowrap}
.tab.file{width:53px;padding:0 0 0 7px;border-right:1px solid #c6cacd;margin-right:8px;text-align:left}
.file .caret{margin-left:4px;vertical-align:2px;border-width:4px 3px 0}
.tabs .active{height:24px;margin-bottom:-1px;background:#fcfcfc;color:#222;border-right:1px solid #c6cacd}
.active + .tab{border-left:0}
.tab.last{border-right:1px solid #c6cacd}
.helpers{margin-left:auto;display:flex;align-items:center;gap:7px;height:16px;margin-bottom:9px;padding-right:4px}

.ribbon{margin:0 4px;display:flex;flex:none;height:101px;border:1px solid #c6cacd}
.group{position:relative;display:flex;flex-direction:column;border-right:1px solid #d6d8da;flex:none}
.gbody{height:77px;display:flex;padding-top:3px}
.gname{height:22px;border-top:1px solid #c6cacd;background:#eeeff2;text-align:center;line-height:21px}
.gname .caret,.cmd .caret{margin-left:5px;vertical-align:2px}
.g1{width:223px}.g2{width:207px}.g3{width:123px}.g4{width:251px}.g5{width:198px}
.rest{flex:1;border-right:0}
.cmd{display:flex;align-items:center;gap:4px;height:24px;white-space:nowrap}
.off{color:#a0a0a0}
.bigbtn{display:flex;flex-direction:column;align-items:center;line-height:12px}
.g1 .bigbtn{width:44px;padding-top:8px;gap:10px}
.g1 .bigbtn .caret{margin-top:-6px}
.g1 .col{margin-left:3px;width:85px}
.g2 .col{margin-left:7px;width:82px}
.g3 .bigbtn{width:47px;padding-top:3px;gap:8px}
.g4 .bigbtn{margin-left:3px}
.g4 .col{margin-left:4px;width:95px}
.pressed{width:44px;height:73px;padding-top:1px;gap:10px;background:linear-gradient(#cfcfd1,#dedee0 50%,#bcbcbf);border-top:2px solid #8f8f92}
.pressed .caret{margin-left:6px;vertical-align:2px}
.g5 .bigbtn{width:38px;gap:9px;padding-top:4px}
.g5 .style{width:46px}
.g5 .bigbtn .i30{height:32px}
.vline{width:1px;height:60px;background:#ddd;margin:6px 9px 0 4px}

.menu{position:absolute;z-index:5;left:3px;top:75px;width:177px;background:linear-gradient(90deg,#fcfcfc 27px,#e0e1e3 27px,#e0e1e3 28px,#fcfcfc 28px);border:1px solid #c3c6c9;box-shadow:3px 3px 2px #999}
.menu button{display:block;width:100%;height:22px;padding-left:34px;text-align:left;font-size:10px;color:#555;white-space:nowrap}
.menu b{display:inline-block;width:4px;font-size:11px}
.menu .hot{padding-left:33px;background:linear-gradient(#e6f5fd,#cfeafa);border:1px solid #79c8ea}
.tip{position:absolute;z-index:6;left:89px;top:111px;width:198px;height:61px;padding:12px 14px;background:#e1f2fb;border:1px solid #c2c8cc;box-shadow:3px 3px 2px #888;font-size:10px;white-space:nowrap;color:#222}
.tip strong{display:block;line-height:14px;margin-bottom:5px}

.work{flex:1;display:flex;min-height:0}
.side{width:227px;margin-left:4px;padding:13px 0 12px;flex:none;display:flex;flex-direction:column}
.ptabs{display:flex;height:30px;margin-bottom:-1px;z-index:1}
.ptab{width:30px;height:29px;border:1px solid #c6cacd;border-left-width:0;display:grid;place-items:center;background:#eeeff2}
.ptab.on{height:30px;border-left-width:1px;border-bottom:0;background:#fcfcfc}
.panel{flex:1;display:flex;flex-direction:column;border:1px solid #c6cacd;border-right:3px solid #c3c7cb;border-bottom:2px solid #c3c7cb}
.phead{display:flex;align-items:center;height:29px;flex:none;border-bottom:1px solid #c6cacd;padding:0 4px 0 6px}
.phead h2{font:bold 13px/16px "Liberation Sans","Noto Sans CJK SC",sans-serif;margin-left:5px}
.phead button{display:flex;align-items:center;gap:8px}
.phead .push{margin-left:auto}
.model{height:33px;border-top:1px solid #c6cacd}
.model button{margin-left:8px}
.model button{gap:7px}
.dtree,.mtree{font-size:10px;color:#444}
.dtree{height:194px;padding-top:6px}
.dtree li,.mtree li{display:flex;align-items:center;height:20px;white-space:nowrap}
.dtree li{padding-left:10px;gap:9px}
.dtree .l1{gap:8px;padding-left:14px}
.dtree .l2{padding-left:50px}
.dtree .lv{padding-left:30px;gap:5px}
.mtree{padding-top:6px}
.mtree li{padding-left:31px;gap:6px}
.mtree .root{padding-left:10px;gap:5px}

.stage{flex:1;min-width:0;display:flex;flex-direction:column;margin-right:4px}
.view{position:relative;flex:1;min-height:0;overflow:hidden}
.drawing{width:1054px;height:479px;margin-left:1px}
.tiny{font-size:8px}
.dark{fill:#111}
.firm{font:900 9px "Noto Sans CJK SC",sans-serif;fill:#111}
.firm-en{font:bold 5px "Liberation Serif",serif;fill:#111}
.cap{font-size:8px;fill:#555}
.capl{font:12px "Liberation Mono",monospace}
.floatbar{position:absolute;left:486px;top:7px;width:144px;height:28px;display:flex;background:#eeeff2;border:1px solid #c6cacd;padding-right:5px}
.floatbar i{flex:1;background:#fff;border-right:1px solid #c6cacd;display:grid;place-items:center end}
.sheets{display:flex;height:26px;flex:none;border-top:1px solid #d8dadd}
.nav{display:flex;align-items:center;gap:5px;padding-left:6px;width:76px}
.nav svg{width:12px;height:8px}
.plus{width:21px;height:17px;margin-top:3px;border:1px solid #c6cacd;background:#eeeff2;font:bold 12px/14px "Liberation Sans",sans-serif}
.sheet{width:73px;height:22px;padding-top:3px;border-bottom:1px solid #c6cacd;font:bold 13px/18px "Liberation Mono","Noto Sans CJK SC",monospace;color:#222}
.filler{flex:1;margin-top:3px;height:20px;border:1px solid #d0d3d6}

.status{position:relative;flex:none;height:93px;display:flex;background:#eeeff1;border-top:2px solid #979797}
.sbtns{display:flex;gap:4px;align-self:flex-end;width:68px;padding:0 0 4px 6px}
.sbtns button{width:22px;height:22px;border:1px solid #c4c6c9;display:grid;place-items:center}
.sbtns .on{background:#dedfe2;border-top:2px solid #aaa}
.sbtns .w14{width:12px;height:18px}
.log{padding-top:6px;font-size:10px;color:#333}
.log li{display:flex;align-items:center;gap:2px;height:16px;white-space:nowrap}
.sright{margin-left:auto;align-self:flex-end;display:flex;padding:0 18px 3px 0}
.cell{height:25px;border-left:1px solid #ccc;display:flex;align-items:center;justify-content:center}
.lights{width:36px;gap:1px}
.lights i{width:6px;height:6px;border-radius:50%;background:#c6c6c6}
.lights .go{width:11px;height:11px;background:#45cf45}
.flagc{width:41px;justify-content:flex-start;padding-left:6px}
.flag{width:12px;height:16px}
.findc{width:47px}
.findc button{width:40px;height:22px;border:1px solid #bbb;border-radius:3px;background:linear-gradient(#fff,#ddd);display:grid;place-items:center}
.filter{padding-left:90px}
.filter select{appearance:none;width:164px;height:19px;border:1px solid #bbb;border-radius:0;background:linear-gradient(90deg,transparent 148px,#bbb 148px,#bbb 149px,transparent 149px),linear-gradient(#f6f6f7,#e8e9eb);font:12px/16px "Noto Sans CJK SC",sans-serif;padding-left:6px;color:#333}
.ime{position:absolute;right:63px;top:18px;width:188px;height:26px;padding:0 5px;display:flex;align-items:center;justify-content:space-between;background:#fff;border:1px solid #ddd;border-radius:4px;box-shadow:0 1px 2px #bbb}
.ime svg{width:18px;height:18px}
.ime b{font:bold 16px/18px "Noto Sans CJK SC",sans-serif;color:#3c97e8}
.ime .thin{font-weight:400}
.mark{position:absolute;right:12px;top:24px;width:170px;display:flex;gap:8px;font:300 40px/50px "Noto Sans CJK SC",sans-serif;color:#111;pointer-events:none;white-space:nowrap}
.fire{color:#ff6a35;font-style:italic}
.mark svg{position:absolute;left:62px;top:-13px;width:18px;height:44px}
.mark em{position:absolute;left:2px;top:45px;font:italic 16px/20px "DejaVu Sans",sans-serif;color:#949494}
.redbox{position:absolute;left:63px;top:-8px;width:213px;height:93px;border:3px solid #e60012}
.meter{position:absolute;right:0;top:455px;width:10px;height:59px;background:#475060;border:1px solid #2b303b;border-right:0;border-radius:4px 0 0 4px;padding:6px 2px 6px 3px}
.meter i{display:block;height:46px;background:repeating-linear-gradient(transparent 0 2px,#475060 2px 3px),linear-gradient(#2a2f38 26px,#c6dc50 27px,#5fdc90 36px,#40dcd8)}
```
